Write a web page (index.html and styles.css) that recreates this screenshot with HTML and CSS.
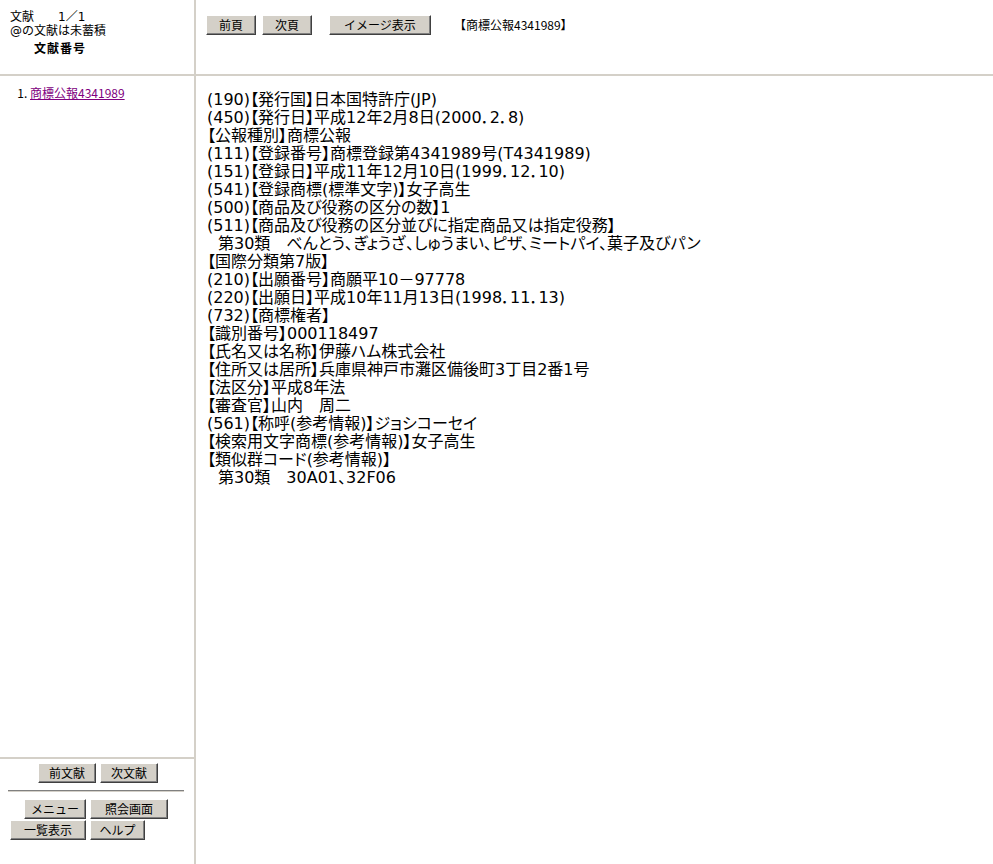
FILE: index.html
```html
<!DOCTYPE html>
<html lang="ja">
  <head>
    <meta charset="utf-8">
    <title>文献表示</title>
    <link rel="stylesheet" href="styles.css">
  </head>
  <body>
    <div class="frames">
      <div class="nav-head">
        <div class="count">文献　　1／1</div>
        <div class="note">@の文献は未蓄積</div>
        <div class="col-title">文献番号</div>
      </div>

      <div class="toolbar">
        <button class="btn w50">前頁</button>
        <button class="btn w50">次頁</button>
        <button class="btn w102 gap-l">イメージ表示</button>
        <span class="doc-title">【商標公報4341989】</span>
      </div>

      <div class="nav">
        <ol class="doc-list">
          <li><a href="#" class="visited">商標公報4341989</a></li>
        </ol>
        <div class="nav-foot">
          <div class="pager">
            <button class="btn w58">前文献</button>
            <button class="btn w58">次文献</button>
          </div>
          <hr class="rule">
          <div class="menu">
            <button class="btn w62">メニュー</button>
            <button class="btn w78">照会画面</button>
            <button class="btn w76">一覧表示</button>
            <button class="btn w55">ヘルプ</button>
          </div>
        </div>
      </div>

      <div class="doc">
        <div>(190)【発行国】日本国特許庁(JP)</div>
        <div>(450)【発行日】平成12年2月8日(2000．2．8)</div>
        <div>【公報種別】商標公報</div>
        <div>(111)【登録番号】商標登録第4341989号(T4341989)</div>
        <div>(151)【登録日】平成11年12月10日(1999．12．10)</div>
        <div>(541)【登録商標(標準文字)】女子高生</div>
        <div>(500)【商品及び役務の区分の数】1</div>
        <div>(511)【商品及び役務の区分並びに指定商品又は指定役務】</div>
        <div class="indent">第30類　べんとう、ぎょうざ、しゅうまい、ピザ、ミートパイ、菓子及びパン</div>
        <div>【国際分類第7版】</div>
        <div>(210)【出願番号】商願平10－97778</div>
        <div>(220)【出願日】平成10年11月13日(1998．11．13)</div>
        <div>(732)【商標権者】</div>
        <div>【識別番号】000118497</div>
        <div>【氏名又は名称】伊藤ハム株式会社</div>
        <div>【住所又は居所】兵庫県神戸市灘区備後町3丁目2番1号</div>
        <div>【法区分】平成8年法</div>
        <div>【審査官】山内　周二</div>
        <div>(561)【称呼(参考情報)】ジョシコーセイ</div>
        <div>【検索用文字商標(参考情報)】女子高生</div>
        <div>【類似群コード(参考情報)】</div>
        <div class="indent">第30類　30A01、32F06</div>
      </div>
    </div>
  </body>
</html>
```

FILE: styles.css
```css
html, body {
  margin: 0;
  height: 100%;
}
body {
  font-family: "Noto Sans CJK JP", "DejaVu Sans", sans-serif;
  color: #000;
  background: #fff;
}

.frames {
  display: grid;
  grid-template-columns: 196px 1fr;
  grid-template-rows: 76px 1fr;
  height: 864px;
}

/* frame edges */
.nav-head, .nav {
  border-right: 2px solid #d4d0c8;
}
.nav-head, .toolbar {
  border-bottom: 2px solid #d4d0c8;
}

.nav-head {
  padding: 10px 0 0 10px;
  font-family: "DejaVu Sans", "Noto Sans CJK JP", sans-serif;
  font-size: 12px;
  line-height: 14px;
}
.col-title {
  font-weight: bold;
  margin: 4px 0 0 24px;
  letter-spacing: 1px;
}

.toolbar {
  display: flex;
  align-items: flex-start;
  padding: 15px 0 0 10px;
}
.toolbar .btn {
  margin-right: 6px;
}
.toolbar .gap-l {
  margin-left: 11px;
}
.doc-title {
  font-size: 12px;
  line-height: 20px;
  margin-left: 17px;
}

.btn {
  font-family: inherit;
  font-size: 12px;
  height: 20px;
  padding: 0;
  line-height: 16px;
  background: #d4d0c8;
  color: #000;
  border: 1px solid;
  border-color: #fff #404040 #404040 #fff;
  box-shadow: inset -1px -1px #808080;
  cursor: pointer;
}
.w50 { width: 50px; }
.w55 { width: 55px; }
.w58 { width: 58px; }
.w62 { width: 62px; }
.w76 { width: 76px; }
.w78 { width: 78px; }
.w102 { width: 102px; }

.nav {
  display: flex;
  flex-direction: column;
}
.doc-list {
  flex: 1;
  margin: 0;
  padding: 10px 0 0 30px;
  font-size: 12px;
  line-height: 14px;
}
.doc-list li::marker {
  content: "1. ";
}
a.visited {
  color: #800080;
}

.nav-foot {
  height: 107px;
  box-sizing: border-box;
  border-top: 2px solid #d4d0c8;
  padding-top: 4px;
}
.pager {
  display: flex;
  justify-content: center;
  gap: 4px;
  padding-left: 2px;
}
.rule {
  margin: 7px 10px 7px 8px;
  border: 0;
  border-top: 1px solid #808080;
  border-bottom: 1px solid #d4d0c8;
}
.menu {
  display: grid;
  grid-template-columns: 78px auto;
  justify-content: start;
  justify-items: end;
  gap: 1px 4px;
  margin-left: 8px;
}
.menu .btn:nth-child(2n) {
  justify-self: start;
}

.doc {
  padding: 15px 0 0 11px;
  font-family: "DejaVu Sans", "Noto Sans CJK JP", sans-serif;
  font-size: 16px;
  line-height: 18px;
  white-space: nowrap;
  font-feature-settings: "palt";
}
.indent {
  padding-left: 11px;
}
```
